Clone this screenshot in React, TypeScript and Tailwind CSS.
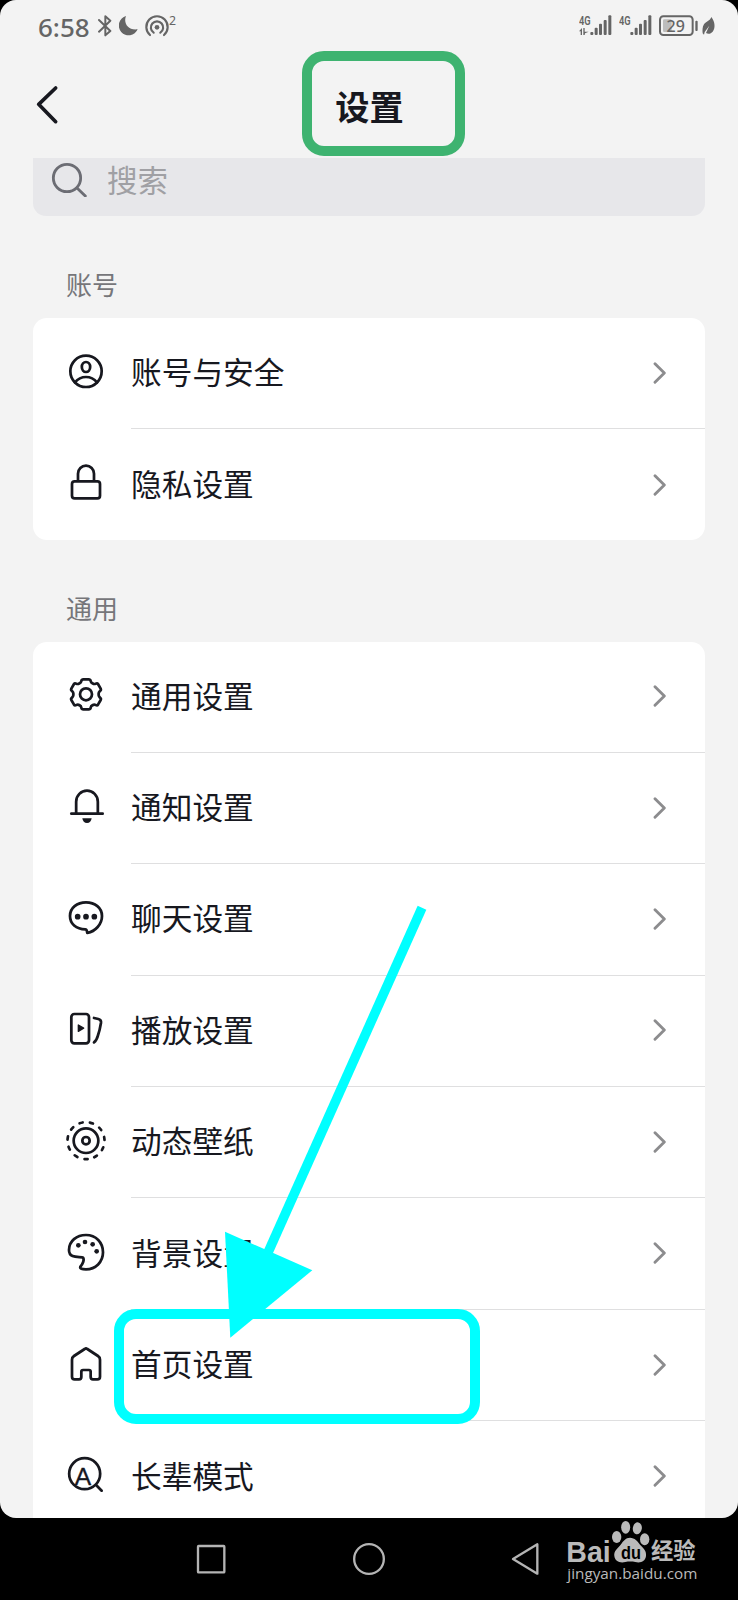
import type { ReactNode } from "react";

type SettingItem = {
  label: string;
  icon: ReactNode;
};

function LineIcon({ children }: { children: ReactNode }) {
  return (
    <svg
      viewBox="0 0 132 132"
      className="mb-[6px] h-11 w-11 shrink-0"
      fill="none"
      stroke="#17181f"
      strokeWidth="8.200"
      strokeLinecap="round"
      strokeLinejoin="round"
    >
      {children}
    </svg>
  );
}

const accountItems: SettingItem[] = [
  {
    label: "账号与安全",
    icon: (
      <LineIcon>
        <circle cx="66" cy="67" r="47" />
        <ellipse cx="66" cy="54" rx="12.500" ry="15" />
        <path d="M33 100Q46 84 66 84T99 100" />
      </LineIcon>
    ),
  },
  {
    label: "隐私设置",
    icon: (
      <LineIcon>
        <rect x="24" y="64" width="84" height="51" rx="8" />
        <path d="M42 62V41a24 24 0 0 1 48 0V62" />
      </LineIcon>
    ),
  },
];

const generalItems: SettingItem[] = [
  {
    label: "通用设置",
    icon: (
      <LineIcon>
        <path
          transform="translate(66 67)"
          d="M-18-34Q-15-35-14-40Q-13-45-8-45H8Q13-45 14-40Q15-35 18-34L21-32Q24-30 29-32Q34-34 36-31L44-17Q46-13 42-10Q38-6 38-3V3Q38 6 42 10Q46 13 44 17L36 31Q34 34 29 32Q24 30 21 32L18 34Q15 35 14 40Q13 45 8 45H-8Q-13 45-14 40Q-15 35-18 34L-21 32Q-24 30-29 32Q-34 34-36 31L-44 17Q-46 13-42 10Q-38 6-38 3V-3Q-38-6-42-10Q-46-13-44-17L-36-31Q-34-34-29-32Q-24-30-21-32Z"
        />
        <circle cx="66" cy="67" r="18" />
      </LineIcon>
    ),
  },
  {
    label: "通知设置",
    icon: (
      <LineIcon>
        <path d="M36.500 89V53a32.500 33 0 0 1 65 0V89" />
        <path d="M22 89H116" />
        <path d="M55 103h28q-2 14-14 14t-14-14z" fill="#17181f" stroke="none" />
      </LineIcon>
    ),
  },
  {
    label: "聊天设置",
    icon: (
      <LineIcon>
        <path d="M64 103C36 103 18 86 18 63C18 39 39 22 66 22C93 22 114 39 114 63C114 88 94 109 70 114C69 114 70 103 64 103Z" />
        <g fill="#17181f" stroke="none">
          <circle cx="41" cy="65" r="8.500" />
          <circle cx="66" cy="65" r="8.500" />
          <circle cx="91" cy="65" r="8.500" />
        </g>
      </LineIcon>
    ),
  },
  {
    label: "播放设置",
    icon: (
      <LineIcon>
        <rect x="22" y="24" width="53" height="88" rx="9" />
        <path d="M43 57L59 66.500L43 76Z" fill="#17181f" strokeWidth="4" />
        <path d="M90 36L103 39Q112 41 111 50Q107 74 102 88Q98 103 90 109" />
      </LineIcon>
    ),
  },
  {
    label: "动态壁纸",
    icon: (
      <LineIcon>
        <circle
          cx="66"
          cy="68"
          r="55.500"
          pathLength="110"
          strokeDasharray="3 7"
          strokeWidth="8"
          transform="rotate(85 66 68)"
        />
        <circle cx="66" cy="68" r="37" />
        <circle cx="66" cy="68" r="11" />
      </LineIcon>
    ),
  },
  {
    label: "背景设置",
    icon: (
      <LineIcon>
        <path d="M15 63C15 36 38 18 66 18C96 18 117 41 117 70C117 99 95 121 66 121C54 121 47 119 49 113C56 106 62 92 57 86C51 81 15 92 15 63Z" />
        <g fill="#17181f" stroke="none">
          <circle cx="43" cy="49" r="7" />
          <circle cx="63" cy="39" r="7" />
          <circle cx="86" cy="46" r="7" />
          <circle cx="98" cy="67" r="7" />
        </g>
      </LineIcon>
    ),
  },
  {
    label: "首页设置",
    icon: (
      <LineIcon>
        <path d="M62 24Q66 21 70 24L102 45Q108 49 108 56V107Q108 115 100 115H87Q80 115 80 108V92Q80 87 75 87H57Q52 87 52 92V108Q52 115 45 115H32Q24 115 24 107V56Q24 49 30 45Z" />
      </LineIcon>
    ),
  },
  {
    label: "长辈模式",
    icon: (
      <LineIcon>
        <circle cx="62" cy="65" r="46.500" />
        <path d="M97 100L113 116" />
        <text
          x="57"
          y="98"
          textAnchor="middle"
          fontSize="74"
          fill="#17181f"
          stroke="#17181f"
          strokeWidth="1"
          className="font-['Liberation_Sans',sans-serif]"
        >
          A
        </text>
      </LineIcon>
    ),
  },
];

function SettingRow({ item, last }: { item: SettingItem; last: boolean }) {
  return (
    <div className="flex h-[111.4px] shrink-0 items-center pl-[31px]">
      {item.icon}
      <div
        className={
          last
            ? "ml-[23px] flex h-full flex-1 items-center justify-between pr-[39.5px]"
            : "ml-[23px] flex h-full flex-1 items-center justify-between border-b border-[#dfdfe0] pr-[39.5px]"
        }
      >
        <span className="mb-[4px] text-[30.700px] leading-10 text-[#17181f]">{item.label}</span>
        <svg viewBox="0 0 39 66" className="mb-[1px] h-[22px] w-[13px]" fill="none">
          <path
            d="M6 5L34 33L6 61"
            stroke="#8c8c8e"
            strokeWidth="8.500"
            strokeLinecap="round"
            strokeLinejoin="round"
          />
        </svg>
      </div>
    </div>
  );
}

function SectionLabel({ children }: { children: ReactNode }) {
  return (
    <h2 className="pt-[53px] pl-[66px] text-[26px] leading-[30px] font-normal text-[#76767a]">
      {children}
    </h2>
  );
}

function Signal({ arrows }: { arrows?: boolean }) {
  return (
    <svg viewBox="0 0 99 66" className="h-[22px] w-[33px]" fill="#656565">
      <text
        x="0"
        y="29"
        fontSize="36"
        fontWeight="600"
        textLength="35"
        lengthAdjust="spacingAndGlyphs"
        className="font-['Roboto',sans-serif]"
      >
        4G
      </text>
      {arrows && (
        <path d="M0 49L9 39V60H5V49ZM13 39V60H17L18 55L29 50H17V39Z" />
      )}
      <rect x="34" y="51" width="9" height="9" rx="3" />
      <rect x="47" y="38" width="9" height="22" rx="3" />
      <rect x="60" y="26" width="9" height="34" rx="3" />
      <rect x="74" y="15" width="9" height="45" rx="3" />
      <rect x="88" y="1" width="9" height="59" rx="3" />
    </svg>
  );
}

function StatusBar() {
  return (
    <div className="flex h-[52px] shrink-0 items-center pr-[22px] pl-[38px] text-[#656565]">
      <span className="mt-px w-[60px] text-[26px] leading-[30px] font-medium font-['Noto_Sans',sans-serif]">6:58</span>
      <svg viewBox="0 0 42 66" className="h-[22px] w-[14px]" fill="none" stroke="#656565" strokeWidth="6" strokeLinejoin="round" strokeLinecap="round">
        <path d="M3 15L37 48L22 61V4L37 17L3 50" />
      </svg>
      <svg viewBox="0 0 60 66" className="ml-[7px] h-[22px] w-[20px]" fill="#656565">
        <path d="M21 3C13 22 25 47 56 43A29.500 29.500 0 1 1 21 3Z" />
      </svg>
      <svg viewBox="0 0 96 66" className="ml-[6px] h-[22px] w-[32px] overflow-visible" fill="none" stroke="#656565" strokeWidth="6.500" strokeLinecap="round">
        <circle cx="36" cy="37" r="7" fill="#656565" stroke="none" />
        <path d="M26 53A18.500 18.500 0 1 1 46 53" />
        <path d="M15 60A32 32 0 1 1 57 60" />
        <text
          x="72"
          y="29"
          fontSize="37"
          fill="#656565"
          stroke="none"
          className="font-['Noto_Sans',sans-serif]"
        >
          2
        </text>
      </svg>
      <div className="ml-auto flex items-center">
        <Signal arrows />
        <span className="w-[7px]" />
        <Signal />
        <svg viewBox="0 0 120 66" className="ml-[7px] h-[22px] w-[40px]" fill="none">
          <rect x="3" y="4" width="98" height="56" rx="10" stroke="#656565" strokeWidth="6" />
          <rect x="12" y="13" width="26" height="38" rx="4" fill="#bdbdbd" />
          <rect x="109" y="17" width="7" height="31" rx="3" fill="#656565" />
          <text
            x="50"
            y="50"
            textAnchor="middle"
            fontSize="48"
            fill="#656565"
            className="font-['Noto_Sans',sans-serif] font-medium"
          >
            29
          </text>
        </svg>
        <svg viewBox="0 0 42 66" className="ml-[3px] h-[22px] w-[14px]" fill="#656565">
          <path d="M28 6C40 22 40 40 32 50C27 56 19 58 12 54L22 32L8 51L6 59L2 55C1 46 1 36 6 28C12 19 24 18 28 6Z" />
        </svg>
      </div>
    </div>
  );
}

function NavBar() {
  return (
    <div className="flex h-[82px] items-center justify-center gap-[124px]">
      <svg viewBox="0 0 102 102" className="h-[34px] w-[34px]" fill="none" stroke="#b4b4b4" strokeWidth="7">
        <rect x="12" y="12" width="79" height="79" rx="2" />
      </svg>
      <svg viewBox="0 0 102 102" className="h-[34px] w-[34px]" fill="none" stroke="#b4b4b4" strokeWidth="7">
        <circle cx="51" cy="51" r="44.500" />
      </svg>
      <svg viewBox="0 0 102 102" className="h-[34px] w-[34px]" fill="none" stroke="#b4b4b4" strokeWidth="7" strokeLinejoin="round">
        <path d="M9 51L82 7V95Z" />
      </svg>
    </div>
  );
}

function Watermark() {
  return (
    <svg
      viewBox="75 60 405 195"
      className="absolute top-[1520px] left-[565px] h-[65px] w-[135px]"
      fill="#bababa"
    >
      <text
        x="79"
        y="185"
        fontSize="91"
        fontWeight="700"
        textLength="133"
        lengthAdjust="spacingAndGlyphs"
        className="font-['Liberation_Sans',sans-serif]"
      >
        Bai
      </text>
      <ellipse cx="230" cy="111" rx="14" ry="18" />
      <ellipse cx="257" cy="82" rx="13.500" ry="19" />
      <ellipse cx="292" cy="85" rx="13.500" ry="18" transform="rotate(10 292 85)" />
      <ellipse cx="314" cy="118" rx="14" ry="18" />
      <path d="M270 113C284 113 293 124 300 134C310 145 320 152 318 168C316 184 302 190 286 186C276 184 266 184 256 186C240 190 225 184 223 168C221 152 234 144 242 134C250 123 257 113 270 113Z" />
      <text
        x="243"
        y="178"
        fontSize="54"
        fontWeight="700"
        fill="#000"
        textLength="60"
        lengthAdjust="spacingAndGlyphs"
        className="font-['Liberation_Sans',sans-serif]"
      >
        du
      </text>
      <text
        x="333"
        y="178"
        fontSize="67"
        fontWeight="700"
        className="font-['Noto_Sans_CJK_SC',sans-serif]"
      >
        经验
      </text>
      <text
        x="82"
        y="236"
        fontSize="45"
        fontWeight="500"
        textLength="390"
        lengthAdjust="spacingAndGlyphs"
        className="font-['Open_Sans',sans-serif]"
      >
        jingyan.baidu.com
      </text>
    </svg>
  );
}

export default function App() {
  return (
    <div className="relative h-[1600px] w-[738px] overflow-hidden bg-black font-['Noto_Sans_CJK_SC',sans-serif]">
      <div className="flex h-[1518px] flex-col overflow-hidden rounded-[16px] bg-[#f3f3f3]">
        <StatusBar />
        <header className="flex h-[106px] shrink-0 items-center pl-[34px]">
          <svg viewBox="0 0 78 132" className="mb-[2px] h-11 w-[26px]" fill="none">
            <path
              d="M65 18L14 67L65 119"
              stroke="#17181f"
              strokeWidth="11"
              strokeLinecap="round"
              strokeLinejoin="round"
            />
          </svg>
          <h1 className="mr-[59px] flex-1 text-center text-[34.200px] leading-10 font-bold text-[#17181f]">
            设置
          </h1>
        </header>

        <div className="mr-[33px] ml-[33px] flex h-[58px] shrink-0 items-center rounded-b-[13px] bg-[#e7e7ea]">
          <svg viewBox="0 0 114 114" className="mt-[-19px] ml-[18px] h-[38px] w-[38px]" fill="none" stroke="#6c6d74" strokeWidth="8.500" strokeLinecap="round">
            <circle cx="48" cy="57" r="41" />
            <path d="M78 87L103 111" />
          </svg>
          <span className="mt-[-16px] ml-[18px] text-[30.500px] leading-10 text-[#a0a0a4]">搜索</span>
        </div>

        <section className="shrink-0">
          <div className="h-[102px]">
            <SectionLabel>账号</SectionLabel>
          </div>
          <div className="mx-[33px] h-[221.5px] overflow-hidden rounded-[14px] bg-white">
            {accountItems.map((item, index) => (
              <SettingRow key={item.label} item={item} last={index === accountItems.length - 1} />
            ))}
          </div>
        </section>

        <section className="shrink-0">
          <div className="h-[102px]">
            <SectionLabel>通用</SectionLabel>
          </div>
          <div className="mx-[33px] rounded-t-[14px] bg-white">
            {generalItems.map((item, index) => (
              <SettingRow key={item.label} item={item} last={index === generalItems.length - 1} />
            ))}
          </div>
        </section>
      </div>

      <NavBar />
      <Watermark />

      {/* annotations */}
      <div className="absolute top-[51px] left-[301.5px] h-[104.5px] w-[163.5px] rounded-[22px] border-[10px] border-[#3eb370]" />
      <div className="absolute top-[1309px] left-[113.5px] h-[115px] w-[366px] rounded-[22px] border-[10px] border-[#00ffff]" />
      <svg viewBox="220 900 210 440" className="absolute top-[900px] left-[220px] h-[440px] w-[210px]">
        <path d="M422 907.700L266 1257" stroke="#00ffff" strokeWidth="9.500" />
        <path d="M230.300 1337.700L225 1231.700L312.300 1270.300Z" fill="#00ffff" />
      </svg>
    </div>
  );
}
